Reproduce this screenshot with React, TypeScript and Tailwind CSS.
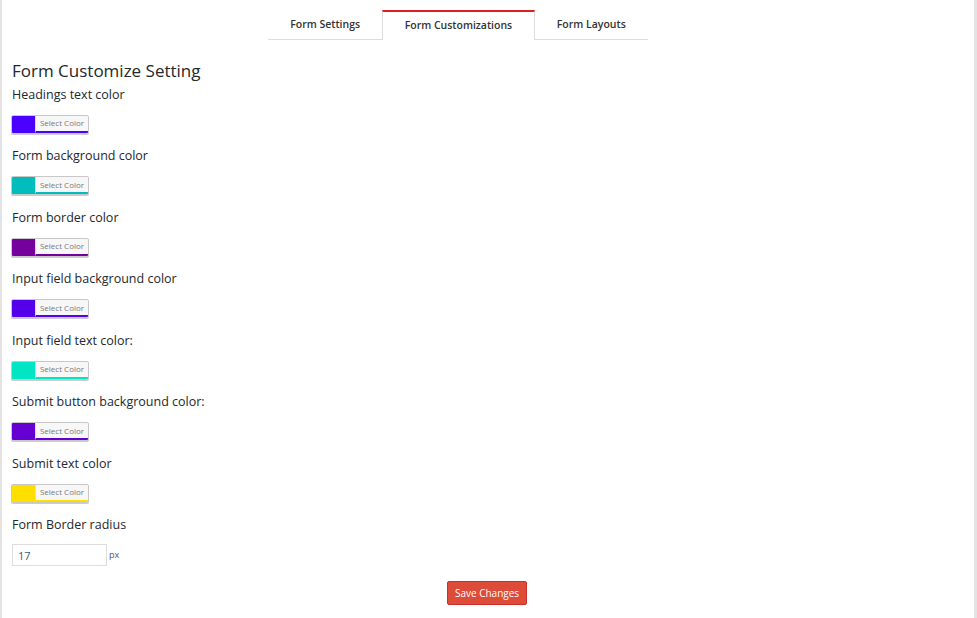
import { useState } from 'react';

type ColorField = { label: string; color: string };

const fields: ColorField[] = [
  { label: 'Headings text color', color: '#4a00ff' },
  { label: 'Form background color', color: '#00bcbc' },
  { label: 'Form border color', color: '#76009e' },
  { label: 'Input field background color', color: '#5400e8' },
  { label: 'Input field text color:', color: '#00e5c4' },
  { label: 'Submit button background color:', color: '#6400d2' },
  { label: 'Submit text color', color: '#ffdf00' },
];

const tabs = ['Form Settings', 'Form Customizations', 'Form Layouts'];

const ColorButton = ({ color }: { color: string }) => (
  <button
    type="button"
    className="-ml-px flex h-[19px] w-[78px] overflow-hidden rounded-[2px] border border-[#c8c8c8] bg-[#f7f7f7] p-0 shadow-[0_1px_0_#cccccc]"
  >
    <span className="h-full w-[23px] shrink-0" style={{ backgroundColor: color }} />
    <span
      className="flex h-full flex-1 items-center justify-center border-b-2 border-l border-l-[#dcdcdc] text-[8px] leading-none text-[#777]"
      style={{ borderBottomColor: color }}
    >
      Select Color
    </span>
  </button>
);

export default function App() {
  const [active, setActive] = useState(1);
  const [radius, setRadius] = useState('17');

  return (
    <div className="flex h-[618px] w-[977px] bg-white font-['Open_Sans',sans-serif] text-[#23282d]">
      <div className="w-[2px] shrink-0 bg-[#e3e3e3]" />
      <div className="flex flex-1 flex-col px-[10px]">
        {/* tab strip, sits a little left of centre */}
        <div className="mt-[10px] flex justify-center pr-[60px]">
          {tabs.map((tab, i) => (
            <button
              key={tab}
              type="button"
              onClick={() => setActive(i)}
              className={
                i === active
                  ? 'h-[30px] border-x border-t-2 border-x-[#dddddd] border-t-[#e02020] bg-white px-[21.5px] text-[10.5px] font-semibold text-[#333]'
                  : 'h-[30px] border-b border-[#dddddd] bg-white px-[22px] text-[10.5px] font-semibold text-[#333]'
              }
            >
              {tab}
            </button>
          ))}
        </div>

        <h2 className="mt-[20px] text-[17px] leading-[22px] font-normal text-[#23282d]">Form Customize Setting</h2>

        {fields.map((f, i) => (
          <div key={f.label} className={i === 0 ? 'mt-[3.5px]' : 'mt-[13.5px]'}>
            <div className="text-[12.5px] leading-[18px]">{f.label}</div>
            <div className="mt-[11px]">
              <ColorButton color={f.color} />
            </div>
          </div>
        ))}

        <div className="mt-[13.5px]">
          <div className="text-[12.5px] leading-[18px]">Form Border radius</div>
          <div className="mt-[10px] flex items-center">
            <input
              value={radius}
              onChange={(e) => setRadius(e.target.value)}
              className="h-[22px] w-[95px] border border-[#dddddd] px-[5px] text-[11px] text-[#3c5a7a] outline-none"
            />
            <span className="ml-[2px] text-[9px] text-[#555]">px</span>
          </div>
        </div>

        <div className="mt-[15px] flex justify-center pr-[2px]">
          <button
            type="button"
            className="h-[24px] w-[80px] rounded-[2px] border border-[#c9302c] bg-[#dd4b39] text-[10px] text-white"
          >
            Save Changes
          </button>
        </div>
      </div>
      <div className="w-[3px] shrink-0 bg-[#e3e3e3]" />
    </div>
  );
}
